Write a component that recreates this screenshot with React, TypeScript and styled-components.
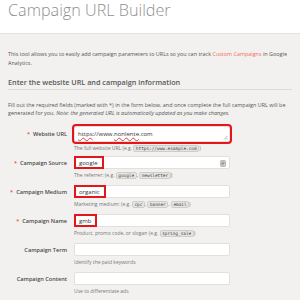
import React from 'react';
import styled, { createGlobalStyle } from 'styled-components';

const GlobalStyle = createGlobalStyle`
  html, body {
    margin: 0;
    padding: 0;
  }
  body {
    width: 300px;
    height: 300px;
    overflow: hidden;
    background: #f2f1ef;
    font-family: 'Open Sans', 'Liberation Sans', sans-serif;
  }
`;

const ANNOT = '#e3161b';

interface FieldRow {
  label: string;
  required?: boolean;
  value?: string;
  marked?: boolean;
  help: React.ReactNode;
  icon?: boolean;
}

const rows: FieldRow[] = [
  {
    label: 'Campaign Source',
    required: true,
    value: 'google',
    marked: true,
    icon: true,
    help: (
      <>
        The referrer: (e.g. <Chip>google</Chip>, <Chip>newsletter</Chip>)
      </>
    ),
  },
  {
    label: 'Campaign Medium',
    required: true,
    value: 'organic',
    marked: true,
    help: (
      <>
        Marketing medium: (e.g. <Chip>cpc</Chip>, <Chip>banner</Chip>, <Chip>email</Chip>)
      </>
    ),
  },
  {
    label: 'Campaign Name',
    required: true,
    value: 'gmb',
    marked: true,
    help: (
      <>
        Product, promo code, or slogan (e.g. <Chip>spring_sale</Chip>)
      </>
    ),
  },
  { label: 'Campaign Term', help: 'Identify the paid keywords' },
  { label: 'Campaign Content', help: 'Use to differentiate ads' },
];

export default function App() {
  return (
    <>
      <GlobalStyle />
      <Header>
        <Title>Campaign URL Builder</Title>
      </Header>
      <Main>
        <Intro>
          This tool allows you to easily add campaign parameters to URLs so you can track{' '}
          <Link>Custom Campaigns</Link> in Google
          <br />
          Analytics.
        </Intro>
        <SectionTitle>Enter the website URL and campaign information</SectionTitle>
        <Lead>
          Fill out the required fields (marked with *) in the form below, and once complete the full campaign URL will be
          <br />
          generated for you. <em>Note: the generated URL is automatically updated as you make changes.</em>
        </Lead>
        <Form>
          <Row $compact>
            <Label>
              <Star>*</Star>Website URL
            </Label>
            <Field $tall $outlined>
              <Value>
                <Misspelled>https</Misspelled>://www.<Misspelled>nonlente</Misspelled>.com
              </Value>
              <Grip viewBox="0 0 5 5">
                <path d="M1 4.5 L4.5 1 M3 4.5 L4.5 3" stroke="#9a9a9a" strokeWidth="0.7" />
              </Grip>
            </Field>
            <Help>
              The full website URL (e.g. <Chip>https://www.example.com</Chip>)
            </Help>
          </Row>
          {rows.map((r) => (
            <Row key={r.label}>
              <Label>
                {r.required && <Star>*</Star>}
                {r.label}
              </Label>
              <Field>
                {r.value && <Value $marked={r.marked}>{r.value}</Value>}
                {r.icon && (
                  <AutofillIcon viewBox="0 0 6 7">
                    <rect x="0.5" y="0.5" width="5" height="6" rx="0.8" fill="#cfcfcf" stroke="#9c9c9c" strokeWidth="0.6" />
                    <path d="M1.6 2.3 H4.4 M1.6 3.5 H4.4 M1.6 4.7 H3.6" stroke="#777" strokeWidth="0.6" />
                  </AutofillIcon>
                )}
              </Field>
              <Help>{r.help}</Help>
            </Row>
          ))}
        </Form>
      </Main>
    </>
  );
}

const Header = styled.header`
  height: 34px;
  box-sizing: border-box;
  padding: 1px 8px 0;
  background: #ffffff;
  border-bottom: 1px solid #e4e2de;
`;

const Title = styled.h1`
  margin: 0;
  font-family: 'Open Sans Light', 'Open Sans', 'Liberation Sans', sans-serif;
  font-size: 16.2px;
  line-height: 18px;
  font-weight: 300;
  color: #8f8f8f;
`;

const Main = styled.main`
  padding: 0 8px;
`;

const Intro = styled.p`
  margin: 16px 0 0;
  font-size: 5.45px;
  line-height: 9px;
  color: #555555;
  white-space: nowrap;
`;

const Link = styled.span`
  color: #f26a5b;
`;

const SectionTitle = styled.h2`
  margin: 9px 0 0;
  padding-bottom: 2px;
  font-size: 7.25px;
  line-height: 10px;
  font-weight: 600;
  color: #5a5a5a;
  border-bottom: 1px solid #dddbd7;
`;

const Lead = styled.p`
  margin: 11px 0 0;
  font-size: 5.45px;
  line-height: 8px;
  color: #555555;
  white-space: nowrap;

  em {
    font-style: italic;
  }
`;

const Form = styled.div`
  margin-top: 9px;
  display: flex;
  flex-direction: column;
`;

const Row = styled.div<{ $compact?: boolean }>`
  display: grid;
  grid-template-columns: 59px 156px;
  column-gap: 7px;
  align-items: center;
  margin-bottom: ${(p) => (p.$compact ? '4px' : '6px')};
`;

const Label = styled.label`
  grid-row: 1;
  grid-column: 1;
  text-align: right;
  font-size: 5.6px;
  font-weight: 600;
  color: #4a4a4a;
  white-space: nowrap;
`;

const Star = styled.span`
  color: #e0483e;
  margin-right: 3px;
`;

const Field = styled.div<{ $tall?: boolean; $outlined?: boolean }>`
  grid-row: 1;
  grid-column: 2;
  position: relative;
  display: flex;
  align-items: stretch;
  box-sizing: border-box;
  height: ${(p) => (p.$tall ? '16px' : '13px')};
  background: #ffffff;
  border: 1px solid #e2e0dc;
  border-radius: 2px;
  outline: ${(p) => (p.$outlined ? `2px solid ${ANNOT}` : 'none')};
`;

const Value = styled.span<{ $marked?: boolean }>`
  display: flex;
  align-items: center;
  box-sizing: border-box;
  font-size: 6px;
  color: #333333;
  padding: 0 3px;
  ${(p) =>
    p.$marked &&
    `
    margin: -1px 0 -1px -1px;
    border: 2px solid ${ANNOT};
    padding: 0 4px 0 3px;
  `}
`;

const Misspelled = styled.span`
  text-decoration: underline wavy #e04040;
  text-decoration-thickness: 0.6px;
  text-underline-offset: 1px;
`;

const Grip = styled.svg`
  position: absolute;
  right: 1px;
  bottom: 1px;
  width: 5px;
  height: 5px;
`;

const AutofillIcon = styled.svg`
  position: absolute;
  right: 3px;
  top: 2.5px;
  width: 6px;
  height: 7px;
`;

const Help = styled.div`
  grid-row: 2;
  grid-column: 2;
  margin-top: 2px;
  height: 8px;
  font-size: 5px;
  line-height: 8px;
  color: #777777;
  white-space: nowrap;
`;

function Chip({ children }: { children: React.ReactNode }) {
  return <ChipBox>{children}</ChipBox>;
}

const ChipBox = styled.code`
  display: inline-block;
  vertical-align: middle;
  font-family: 'DejaVu Sans Mono', 'Liberation Mono', monospace;
  font-size: 4.4px;
  line-height: 5px;
  padding: 0 1.5px;
  background: #e6e5e3;
  border: 0.5px solid #cfcdca;
  border-radius: 2px;
  color: #444444;
`;
